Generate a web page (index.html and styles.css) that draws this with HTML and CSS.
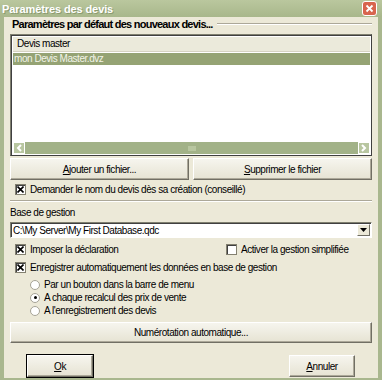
FILE: index.html
```html
<!DOCTYPE html>
<html lang="fr">
<head>
  <title>Paramètres des devis</title>
  <meta charset="UTF-8" />
  <link rel="stylesheet" href="styles.css">
</head>
<body>
  <div class="window">
    <div class="titlebar">
      <span class="title">Paramètres des devis</span>
      <span class="close">
        <svg width="9" height="9" viewBox="0 0 9 9"><path d="M1.5 1.5 L7.5 7.5 M7.5 1.5 L1.5 7.5" stroke="#fff" stroke-width="1.8"/></svg>
      </span>
    </div>

    <div class="body">
      <div class="heading">
        <span>Paramètres par défaut des nouveaux devis...</span>
        <span class="rule"></span>
      </div>

      <div class="listbox">
        <div class="list-head">Devis master</div>
        <div class="list-row selected">mon Devis Master.dvz</div>
        <div class="list-fill"></div>
        <div class="hscroll">
          <span class="arrow">
            <svg width="6" height="8" viewBox="0 0 6 8"><path d="M5 1 L2 4 L5 7" stroke="#fff" stroke-width="2" fill="none"/></svg>
          </span>
          <span class="thumb"><span class="grip"></span></span>
          <span class="arrow">
            <svg width="6" height="8" viewBox="0 0 6 8"><path d="M1 1 L4 4 L1 7" stroke="#fff" stroke-width="2" fill="none"/></svg>
          </span>
        </div>
      </div>

      <div class="btn-row">
        <button class="btn"><u>A</u>jouter un fichier...</button>
        <button class="btn"><u>S</u>upprimer le fichier</button>
      </div>

      <label class="check first">
        <span class="box"><svg width="7" height="7" viewBox="0 0 7 7"><path d="M0.5 0.5 L6.5 6.5 M6.5 0.5 L0.5 6.5" stroke="#000" stroke-width="1.6"/></svg></span>Demander le nom du devis dès sa création (conseillé)
      </label>

      <div class="sep"></div>

      <div class="field-label">Base de gestion</div>
      <div class="combo">
        <span class="combo-text">C:\My Server\My First Database.qdc</span>
        <span class="combo-btn">
          <svg width="7" height="4" viewBox="0 0 7 4"><path d="M0 0 H7 L3.5 4 Z" fill="#000"/></svg>
        </span>
      </div>

      <div class="check-row">
        <label class="check left"><span class="box"><svg width="7" height="7" viewBox="0 0 7 7"><path d="M0.5 0.5 L6.5 6.5 M6.5 0.5 L0.5 6.5" stroke="#000" stroke-width="1.6"/></svg></span>Imposer la déclaration</label>
        <label class="check"><span class="box"></span>Activer la gestion simplifiée</label>
      </div>
      <label class="check indent"><span class="box"><svg width="7" height="7" viewBox="0 0 7 7"><path d="M0.5 0.5 L6.5 6.5 M6.5 0.5 L0.5 6.5" stroke="#000" stroke-width="1.6"/></svg></span>Enregistrer automatiquement les données en base de gestion</label>

      <div class="radios">
        <label class="radio"><span class="dot"></span>Par un bouton dans la barre de menu</label>
        <label class="radio"><span class="dot on"></span>A chaque recalcul des prix de vente</label>
        <label class="radio"><span class="dot"></span>A l'enregistrement des devis</label>
      </div>

      <button class="btn wide">Numérotation automatique...</button>

      <div class="footer">
        <button class="btn default"><u>O</u>k</button>
        <button class="btn"><u>A</u>nnuler</button>
      </div>
    </div>
  </div>
</body>
</html>
```

FILE: styles.css
```css
body {
  margin: 0;
  font-family: "Liberation Sans", Arial, sans-serif;
  font-size: 10px;
  letter-spacing: -0.45px;
  color: #000;
  background: #fff;
}

.window {
  width: 382px;
  height: 380px;
  box-sizing: border-box;
  background: #a9b78e;
  padding: 0 4px 2px 4px;
  display: flex;
  flex-direction: column;
}

.titlebar {
  height: 17px;
  margin: 0 -4px;
  padding: 0 5px 0 2px;
  display: flex;
  align-items: center;
  justify-content: space-between;
  background: linear-gradient(#bac79e, #a8b78b);
}

.title {
  color: #fff;
  font-weight: bold;
  font-size: 11px;
  letter-spacing: -0.1px;
  text-shadow: 1px 1px 0 #8b9a6e;
}

.close {
  width: 13px;
  height: 13px;
  border: 1px solid #fff;
  border-radius: 3px;
  background: #d8644e;
  display: flex;
  align-items: center;
  justify-content: center;
}

.body {
  flex: 1;
  background: #ece9d8;
  padding: 0 6px;
  display: flex;
  flex-direction: column;
}

.heading {
  display: flex;
  align-items: center;
  font-weight: bold;
  font-size: 11px;
  letter-spacing: -0.75px;
  height: 14px;
  padding-left: 2px;
}

.heading .rule {
  flex: 1;
  margin-left: 4px;
  border-top: 1px solid #aca899;
  border-bottom: 1px solid #fff;
}

.listbox {
  margin-top: 3px;
  height: 122px;
  box-sizing: border-box;
  border: 1px solid #7f7f6f;
  border-right-color: #404040;
  border-bottom-color: #404040;
  box-shadow: inset 1px 1px 0 #404040;
  background: #fff;
  display: flex;
  flex-direction: column;
  padding: 2px 1px 1px 2px;
}

.list-head {
  height: 14px;
  line-height: 14px;
  padding-left: 4px;
  background: #ebeadb;
  border-bottom: 1px solid #d6d2c2;
}

.list-row {
  height: 12px;
  line-height: 12px;
  margin-top: 1px;
  padding-left: 1px;
}

.list-row.selected {
  background: #95a374;
  color: #f2f4e8;
}

.list-fill {
  flex: 1;
}

.hscroll {
  height: 12px;
  display: flex;
  background: #f3f4ec;
}

.arrow {
  width: 12px;
  background: #b8c6a0;
  border: 1px solid #fff;
  box-sizing: border-box;
  display: flex;
  align-items: center;
  justify-content: center;
}

.thumb {
  flex: 1;
  background: #a2b288;
  display: flex;
  align-items: center;
  justify-content: center;
}

.grip {
  width: 8px;
  height: 5px;
  background: #b8c6a0;
}

.btn-row {
  display: flex;
  gap: 4px;
  margin-top: 2px;
}

.btn {
  font-family: inherit;
  font-size: 10px;
  letter-spacing: -0.45px;
  color: #000;
  height: 22px;
  background: linear-gradient(#f6f5ee, #e6e3d3);
  border: 1px solid;
  border-color: #fff #716f64 #716f64 #fff;
  box-shadow: inset -1px -1px 0 #aca899;
  padding: 0;
}

.btn-row .btn {
  flex: 1;
}

.check,
.radio {
  display: flex;
  align-items: center;
  height: 18px;
  white-space: nowrap;
}

.check.first {
  height: 16px;
  padding-left: 5px;
  margin-top: 1px;
}

.box {
  width: 9px;
  height: 9px;
  background: #fff;
  border: 1px solid #838070;
  margin-right: 4px;
  box-shadow: inset 1px 1px 0 #404040;
  display: flex;
  align-items: center;
  justify-content: center;
}

.sep {
  margin: 3px 0 4px;
  border-top: 1px solid #aca899;
  border-bottom: 1px solid #fff;
}

.field-label {
  height: 13px;
  line-height: 13px;
}

.combo {
  margin-top: 3px;
  height: 16px;
  box-sizing: border-box;
  background: #fff;
  border: 1px solid #7f7f6f;
  border-right-color: #fff;
  border-bottom-color: #fff;
  box-shadow: inset 1px 1px 0 #404040;
  display: flex;
  align-items: center;
}

.combo-text {
  flex: 1;
  padding-left: 2px;
}

.combo-btn {
  width: 13px;
  height: 12px;
  margin-right: 1px;
  background: #ece9d8;
  border: 1px solid;
  border-color: #fff #716f64 #716f64 #fff;
  box-sizing: border-box;
  display: flex;
  align-items: center;
  justify-content: center;
}

.check-row {
  display: flex;
  margin-top: 2px;
}

.check.left {
  width: 211px;
  padding-left: 5px;
}

.check.indent {
  padding-left: 5px;
}

.radios {
  margin-top: 2px;
  padding-left: 20px;
}

.radio {
  height: 13px;
}

.dot {
  width: 8px;
  height: 8px;
  border-radius: 50%;
  background: #fff;
  border: 1px solid #a6a396;
  margin-right: 4px;
  position: relative;
}

.dot.on::after {
  content: "";
  position: absolute;
  left: 2.5px;
  top: 2.5px;
  width: 3px;
  height: 3px;
  border-radius: 50%;
  background: #000;
}

.btn.wide {
  margin-top: 5px;
  height: 21px;
}

.footer {
  flex: 1;
  display: flex;
  align-items: flex-start;
  justify-content: space-between;
  padding: 12px 17px 0 17px;
}

.footer .btn {
  width: 66px;
  height: 22px;
}

.btn.default {
  outline: 1px solid #000;
}
```
